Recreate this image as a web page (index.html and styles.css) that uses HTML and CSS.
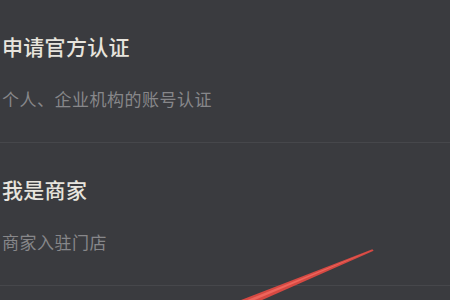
FILE: index.html
```html
<!DOCTYPE html>
<html lang="zh-CN">
<head>
<meta charset="utf-8">
<title>认证</title>
<link rel="stylesheet" href="styles.css">
</head>
<body>
<main class="page">
  <ul class="list">
    <li class="item">
      <div class="title">申请官方认证</div>
      <div class="desc">个人、企业机构的账号认证</div>
    </li>
    <li class="item">
      <div class="title">我是商家</div>
      <div class="desc">商家入驻门店</div>
    </li>
  </ul>
  <svg class="arrow" width="450" height="300" viewBox="0 0 450 300" aria-hidden="true">
    <defs>
      <filter id="soft" x="-10%" y="-50%" width="120%" height="200%">
        <feGaussianBlur stdDeviation="0.7"/>
      </filter>
    </defs>
    <polygon points="373.6,250.8 372.4,249.2 232.8,303.2 236.8,311.2" fill="#d54943" filter="url(#soft)"/>
    <polygon points="372.6,250.1 234.2,305.2 235.4,308.2" fill="#f26a60" opacity="0.85"/>
  </svg>
</main>
</body>
</html>
```
FILE: styles.css
```css
html, body {
  margin: 0;
  padding: 0;
}
body {
  background: #3a3b3f;
  width: 450px;
  height: 300px;
  overflow: hidden;
  font-family: "Noto Sans CJK SC", "Noto Sans", sans-serif;
}
.page {
  position: relative;
  width: 450px;
  height: 300px;
}
.list {
  list-style: none;
  margin: 0;
  padding: 0;
}
.item {
  display: flex;
  flex-direction: column;
  padding: 31px 0 30px 2px;
  border-bottom: 1px solid #46474b;
}
.title {
  font-size: 21px;
  line-height: 30px;
  font-weight: 500;
  color: #e7e4dd;
  letter-spacing: 0.3px;
}
.desc {
  margin-top: 25px;
  font-size: 17px;
  line-height: 26px;
  color: #87878a;
  letter-spacing: 0.5px;
}
.arrow {
  position: absolute;
  left: 0;
  top: 0;
  pointer-events: none;
}
```
